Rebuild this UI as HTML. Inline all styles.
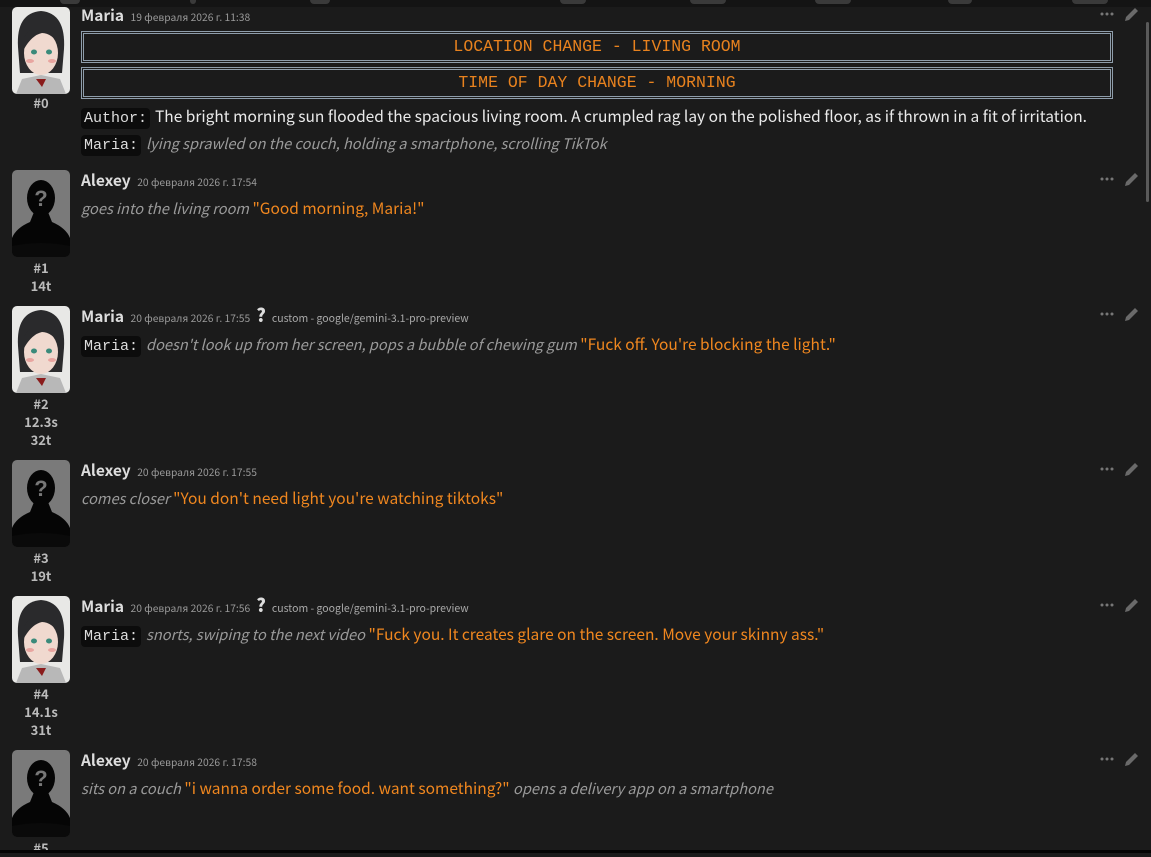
<!DOCTYPE html>
<html><head><meta charset="utf-8"><style>
*{margin:0;padding:0;box-sizing:border-box}
body{width:1151px;height:853px;overflow:hidden;background:#1b1b1b;font-family:"Noto Sans CJK JP","Liberation Sans",sans-serif;color:#dcdcdc;position:relative}
.top{position:absolute;left:0;top:0;width:1151px;height:7px;background:#141414}
.top i{position:absolute;top:0;height:4px;background:#3a3a3a;border-radius:0 0 4px 4px}
.bot{position:absolute;left:0;top:850px;width:1151px;height:3px;background:#050505}
.sb{position:absolute;left:1146px;top:22px;width:3px;height:180px;background:#5a5a5a;border-radius:2px}
.av{position:absolute;left:12px;width:58px;height:87px;border-radius:5px;overflow:hidden}
.idx{position:absolute;left:0;width:82px;text-align:center;font-weight:bold;font-size:13px;color:#bbb;line-height:18px}
.nm{position:absolute;left:81px;font-weight:bold;font-size:15.5px;color:#ddd;white-space:nowrap;line-height:18px}
.nm span{font-weight:normal;font-size:10.3px;color:#9a9a9a;margin-left:3px}
.nm b{font-size:18px;color:#ddd;margin:0 6px 0 6px}
.nm em{font-style:normal;font-weight:normal;font-size:10.5px;color:#aaa}
.ln{position:absolute;left:81px;font-size:15.5px;white-space:nowrap;line-height:20px;color:#eaeaea}
.it{font-style:italic;color:#9a9a9a;font-size:14.6px}
.q{color:#f0871f}
.lb{font-family:"Liberation Mono",monospace;background:#0c0c0c;color:#ddd;border-radius:4px;padding:0 3px;margin-right:5px;font-size:15px;display:inline-block;line-height:21px}
.box{position:absolute;left:81px;width:1032px;height:32px;border:3px double #8e9dab;text-align:center;font-family:"Liberation Mono",monospace;font-size:16.5px;color:#e8821e;line-height:26px}
.ic{position:absolute;left:1100px;width:40px;height:16px}
</style></head><body>
<div class="top"><i style="left:60px;width:20px"></i><i style="left:190px;width:6px"></i><i style="left:310px;width:20px"></i><i style="left:560px;width:26px"></i><i style="left:690px;width:36px"></i><i style="left:815px;width:36px"></i><i style="left:948px;width:24px"></i><i style="left:1072px;width:36px"></i></div>
<div class="sb"></div>

<svg width="0" height="0" style="position:absolute"><defs>
<symbol id="maria" viewBox="0 0 58 87"><rect width="58" height="87" fill="#e8e8e6"/><path d="M6 40 Q4 6 29 4 Q54 6 52 42 L50 66 L8 66Z" fill="#2a2a2c"/><ellipse cx="29" cy="46" rx="17" ry="22" fill="#f0d9cf"/><path d="M10 34 Q20 14 40 18 Q50 26 49 40 Q40 26 30 26 Q20 28 12 42Z" fill="#2a2a2c"/><ellipse cx="22" cy="45" rx="3" ry="2.5" fill="#3a8a7a"/><ellipse cx="37" cy="45" rx="3" ry="2.5" fill="#3a8a7a"/><ellipse cx="18" cy="54" rx="4" ry="2" fill="#e8a5a0"/><ellipse cx="40" cy="54" rx="4" ry="2" fill="#e8a5a0"/><path d="M4 87 L10 72 L29 68 L48 72 L54 87Z" fill="#b8b8b8"/><path d="M24 72 L34 72 L30 80Z" fill="#8a1c1c"/></symbol>
<symbol id="alex" viewBox="0 0 58 87"><rect width="58" height="87" fill="#7a7a7a"/><ellipse cx="29" cy="28" rx="14" ry="18" fill="#050505"/><path d="M0 87 L0 68 Q4 58 18 52 L22 42 L36 42 L40 52 Q54 58 58 68 L58 87Z" fill="#050505"/><path d="M0 76 Q29 70 58 76 L58 87 L0 87Z" fill="#0a0a0a"/><text x="29" y="36" text-anchor="middle" font-family="Liberation Sans,sans-serif" font-weight="bold" font-size="22" fill="#777">?</text></symbol>
<symbol id="ic" viewBox="0 0 40 16"><circle cx="2" cy="8" r="1.5" fill="#777"/><circle cx="7" cy="8" r="1.5" fill="#777"/><circle cx="12" cy="8" r="1.5" fill="#777"/><path d="M25 15 L26 11 L35 2 L38 5 L29 14Z" fill="#6a6a6a"/></symbol>
</defs></svg>

<!-- 0 -->
<svg class="av" style="top:7px"><use href="#maria"/></svg>
<div class="idx" style="top:94px">#0</div>
<div class="nm" style="top:6px">Maria <span>19 февраля 2026 г. 11:38</span></div>
<svg class="ic" style="top:6px"><use href="#ic"/></svg>
<div class="box" style="top:31px">LOCATION CHANGE - LIVING ROOM</div>
<div class="box" style="top:67px">TIME OF DAY CHANGE - MORNING</div>
<div class="ln" style="top:106px"><span class="lb">Author:</span>The bright morning sun flooded the spacious living room. A crumpled rag lay on the polished floor, as if thrown in a fit of irritation.</div>
<div class="ln" style="top:133px"><span class="lb">Maria:</span><span class="it">lying sprawled on the couch, holding a smartphone, scrolling TikTok</span></div>

<!-- 1 -->
<svg class="av" style="top:170px"><use href="#alex"/></svg>
<div class="idx" style="top:259px">#1<br>14t</div>
<div class="nm" style="top:171px">Alexey <span>20 февраля 2026 г. 17:54</span></div>
<svg class="ic" style="top:171px"><use href="#ic"/></svg>
<div class="ln" style="top:198px"><span class="it">goes into the living room</span> <span class="q">"Good morning, Maria!"</span></div>

<!-- 2 -->
<svg class="av" style="top:306px"><use href="#maria"/></svg>
<div class="idx" style="top:395px">#2<br>12.3s<br>32t</div>
<div class="nm" style="top:306px">Maria <span>20 февраля 2026 г. 17:55</span><b>?</b><em>custom - google/gemini-3.1-pro-preview</em></div>
<svg class="ic" style="top:306px"><use href="#ic"/></svg>
<div class="ln" style="top:334px"><span class="lb">Maria:</span><span class="it">doesn't look up from her screen, pops a bubble of chewing gum</span> <span class="q">"Fuck off. You're blocking the light."</span></div>

<!-- 3 -->
<svg class="av" style="top:460px"><use href="#alex"/></svg>
<div class="idx" style="top:549px">#3<br>19t</div>
<div class="nm" style="top:461px">Alexey <span>20 февраля 2026 г. 17:55</span></div>
<svg class="ic" style="top:461px"><use href="#ic"/></svg>
<div class="ln" style="top:488px"><span class="it">comes closer</span> <span class="q">"You don't need light you're watching tiktoks"</span></div>

<!-- 4 -->
<svg class="av" style="top:596px"><use href="#maria"/></svg>
<div class="idx" style="top:685px">#4<br>14.1s<br>31t</div>
<div class="nm" style="top:596px">Maria <span>20 февраля 2026 г. 17:56</span><b>?</b><em>custom - google/gemini-3.1-pro-preview</em></div>
<svg class="ic" style="top:597px"><use href="#ic"/></svg>
<div class="ln" style="top:624px"><span class="lb">Maria:</span><span class="it">snorts, swiping to the next video</span> <span class="q">"Fuck you. It creates glare on the screen. Move your skinny ass."</span></div>

<!-- 5 -->
<svg class="av" style="top:750px"><use href="#alex"/></svg>
<div class="idx" style="top:839px">#5</div>
<div class="nm" style="top:751px">Alexey <span>20 февраля 2026 г. 17:58</span></div>
<svg class="ic" style="top:751px"><use href="#ic"/></svg>
<div class="ln" style="top:778px"><span class="it">sits on a couch</span> <span class="q">"i wanna order some food. want something?"</span> <span class="it">opens a delivery app on a smartphone</span></div>

<div class="bot"></div>
</body></html>
